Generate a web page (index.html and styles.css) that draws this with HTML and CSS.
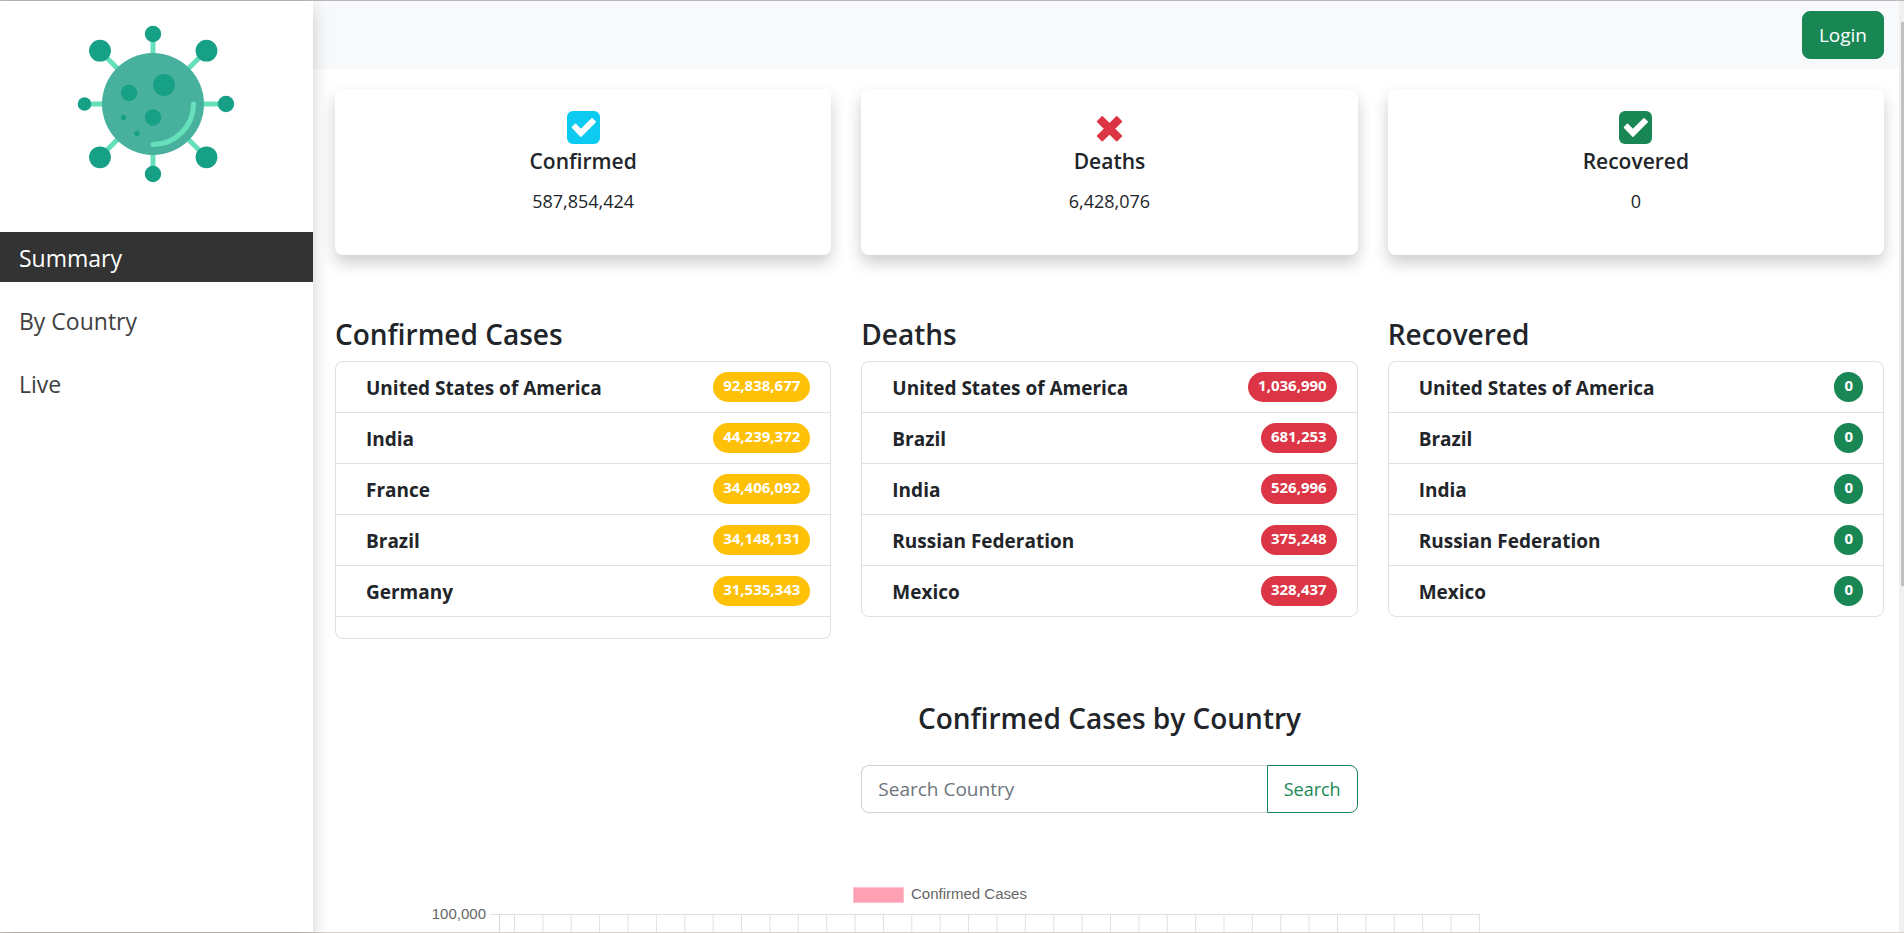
FILE: index.html
```html
<!DOCTYPE html>
<html lang="en">
<head>
<meta charset="utf-8">
<title>Covid Summary</title>
<link rel="stylesheet" href="styles.css">
</head>
<body>
<svg class="defs" aria-hidden="true">
  <symbol id="check-square" viewBox="0 0 33 37">
    <rect y="2" width="33" height="33" rx="6"/>
    <path d="M5.500 18.400L8.500 15.400L13.900 20.800L25 9.700L28.200 12.900L13.900 27.200Z" fill="#fff" stroke="#fff" stroke-width="1.500" stroke-linejoin="round"/>
  </symbol>
  <symbol id="times" viewBox="0 0 33 37">
    <path transform="translate(3.750 7)" d="M.8 5.500L5.500 .8L12.750 8.050L20 .8L24.700 5.500L17.450 12.750L24.700 20L20 24.700L12.750 17.450L5.500 24.700L.8 20L8.050 12.750Z" stroke="currentColor" stroke-width="1.600" stroke-linejoin="round"/>
  </symbol>
</svg>
<div class="app">
  <aside class="sidebar">
    <div class="brand">
      <svg class="logo" viewBox="0 0 156 156" aria-label="Virus logo">
        <g stroke="#65e0bb" stroke-width="5">
          <path d="M75 8V148M6 78H148M22 25L128 131M128 25L22 131"/>
        </g>
        <circle cx="75" cy="78" r="51" fill="#47b19d"/>
        <path d="M115.500 78A40.500 40.500 0 0 1 75 118.500" fill="none" stroke="#65e0bb" stroke-width="5" stroke-linecap="round"/>
        <g fill="#16a085">
          <circle cx="75" cy="8" r="8.200"/><circle cx="75" cy="148" r="8.200"/>
          <circle cx="6.500" cy="78" r="6.800"/><circle cx="148" cy="78" r="8.200"/>
          <circle cx="22" cy="24.700" r="10.900"/><circle cx="128.500" cy="24.700" r="10.900"/>
          <circle cx="22" cy="131.300" r="10.900"/><circle cx="128.500" cy="131.300" r="10.900"/>
          <circle cx="86" cy="59" r="10.900"/><circle cx="51" cy="67" r="8.200"/>
          <circle cx="75" cy="91.500" r="8.200"/><circle cx="45.500" cy="91.500" r="2.700"/>
          <circle cx="59" cy="107.500" r="2.700"/>
        </g>
      </svg>
    </div>
    <nav class="menu">
      <a class="menu-link active" href="#summary">Summary</a>
      <a class="menu-link" href="#country">By Country</a>
      <a class="menu-link" href="#live">Live</a>
    </nav>
  </aside>
  <main class="main">
    <header class="navbar"><button class="login" type="button">Login</button></header>
    <section class="row cards">
      <article class="card"><svg class="icon info"><use href="#check-square"/></svg><h5>Confirmed</h5><p>587,854,424</p></article>
      <article class="card"><svg class="icon danger"><use href="#times"/></svg><h5>Deaths</h5><p>6,428,076</p></article>
      <article class="card"><svg class="icon success"><use href="#check-square"/></svg><h5>Recovered</h5><p>0</p></article>
    </section>
    <section class="row lists">
      <div>
        <h3>Confirmed Cases</h3>
        <ul class="list warn">
          <li><b>United States of America</b><span>92,838,677</span></li>
          <li><b>India</b><span>44,239,372</span></li>
          <li><b>France</b><span>34,406,092</span></li>
          <li><b>Brazil</b><span>34,148,131</span></li>
          <li><b>Germany</b><span>31,535,343</span></li>
          <li class="empty"></li>
        </ul>
      </div>
      <div>
        <h3>Deaths</h3>
        <ul class="list dead">
          <li><b>United States of America</b><span>1,036,990</span></li>
          <li><b>Brazil</b><span>681,253</span></li>
          <li><b>India</b><span>526,996</span></li>
          <li><b>Russian Federation</b><span>375,248</span></li>
          <li><b>Mexico</b><span>328,437</span></li>
        </ul>
      </div>
      <div>
        <h3>Recovered</h3>
        <ul class="list okay">
          <li><b>United States of America</b><span>0</span></li>
          <li><b>Brazil</b><span>0</span></li>
          <li><b>India</b><span>0</span></li>
          <li><b>Russian Federation</b><span>0</span></li>
          <li><b>Mexico</b><span>0</span></li>
        </ul>
      </div>
    </section>
    <section class="row finder">
      <form class="search">
        <h3>Confirmed Cases by Country</h3>
        <div class="group">
          <input type="text" placeholder="Search Country" aria-label="Search Country">
          <button type="button">Search</button>
        </div>
      </form>
    </section>
    <section class="chart">
      <svg class="plot" width="1080" height="540" viewBox="0 0 1080 540">
        <defs>
          <pattern id="ticks" x="114" y="0" width="28.380" height="540" patternUnits="userSpaceOnUse"><rect width="1" height="540" fill="#e0e0e0"/></pattern>
        </defs>
        <rect x="453.500" y="7.500" width="50" height="15" fill="#ffa1b5" stroke="#ffc1ce"/>
        <text x="511" y="19" font-size="15">Confirmed Cases</text>
        <text x="86" y="39" font-size="15" text-anchor="end">100,000</text>
        <rect x="90" y="34" width="990" height="1" fill="#e0e0e0"/>
        <rect x="99" y="34" width="1" height="506" fill="#d6d6d6"/>
        <rect x="114" y="34" width="966" height="506" fill="url(#ticks)"/>
      </svg>
    </section>
  </main>
  <div class="scrollbar"><div class="thumb"></div></div>
</div>
</body>
</html>
```
FILE: styles.css
```css
* { box-sizing: border-box; }
body {
  margin: 0;
  height: 100vh;
  overflow: hidden;
  font: 19px/30px "Open Sans", "Noto Sans", sans-serif;
  color: #212529;
  background: #fff;
}
h3, h5, p, ul { margin: 0; padding: 0; }
h3 { font-size: 28px; line-height: 42px; font-weight: 600; }
.defs { position: absolute; width: 0; height: 0; }
.app {
  display: flex;
  height: 100vh;
  border-top: 1px solid #b8b8ba;
  border-bottom: 1px solid #d8cec8;
}
.sidebar {
  position: relative;
  z-index: 1;
  flex: 0 0 313px;
  background: #fff;
  box-shadow: 0 8px 16px rgba(0, 0, 0, .2);
}
.brand { height: 231px; padding: 25px 0 0 78px; }
.logo { display: block; width: 156px; height: 156px; overflow: visible; }
.menu { display: flex; flex-direction: column; gap: 13px; }
.menu-link {
  padding: 8px 19px 6px;
  font-size: 23px;
  line-height: 36px;
  color: #404040;
  text-decoration: none;
}
.menu-link.active { color: #fff; background: #333; }
.main { flex: 1; min-width: 0; overflow: hidden; }
.navbar {
  display: flex;
  justify-content: flex-end;
  padding: 10px 15px;
  background: #f8f9fb;
}
button { font: inherit; padding: 8px 16px; border-radius: 8px; }
.login { height: 48px; color: #fff; background: #198754; border: 1px solid #198754; }
.row {
  display: grid;
  grid-template-columns: repeat(3, minmax(0, 1fr));
  column-gap: 30px;
  padding: 0 15px 0 22px;
}
.cards { padding-top: 20px; }
.card {
  display: flex;
  flex-direction: column;
  align-items: center;
  padding: 20px 20px 39px;
  border-radius: 8px;
  box-shadow: 0 8px 16px rgba(0, 0, 0, .2);
}
.card p { font-size: 18px; }
.icon { width: 33px; height: 37px; fill: currentColor; }
.info { color: #0dcaf0; }
.danger { color: #dc3545; }
.success { color: #198754; }
.card h5 { font-size: 21px; line-height: 30px; font-weight: 600; margin-bottom: 10px; }
.lists { padding-top: 58px; }
.list { list-style: none; margin-top: 6px; border: 1px solid #dfdfdf; border-radius: 8px; }
.list li {
  display: flex;
  justify-content: space-between;
  align-items: flex-start;
  padding: 10px 20px 10px 30px;
  border-bottom: 1px solid #dfdfdf;
}
.list li:last-child { border-bottom: 0; }
.list .empty { height: 21px; }
.list b { font-weight: 700; padding-top: 2px; line-height: 28px; }
.list span {
  height: 30px;
  padding: 5px 10px;
  border-radius: 15px;
  font-size: 15px;
  font-weight: 700;
  line-height: 16px;
  color: #fff;
}
.warn span { background: #ffc107; }
.dead span { background: #dc3545; }
.okay span { background: #198754; }
.finder { padding-top: 58px; }
.search { grid-column: 2; }
.search h3 { text-align: center; }
.group { display: flex; margin-top: 26px; }
.group input {
  flex: 1;
  min-width: 0;
  height: 48px;
  padding: 8px 16px;
  font: inherit;
  border: 1px solid #ced4da;
  border-right: 0;
  border-radius: 8px 0 0 8px;
}
.group input::placeholder { color: #6c757d; opacity: 1; }
.group button {
  height: 48px;
  font-size: 18px;
  color: #198754;
  background: #fff;
  border: 1px solid #198754;
  border-radius: 0 8px 8px 0;
}
.chart { padding: 67px 0 0 87px; }
.plot { display: block; font-family: "Liberation Sans", Arial, sans-serif; fill: #666; }
.scrollbar { flex: 0 0 5px; padding: 21px 0 0 2px; background: #f0f0f0; }
.thumb { height: 62%; background: #c1c1c1; }
```
